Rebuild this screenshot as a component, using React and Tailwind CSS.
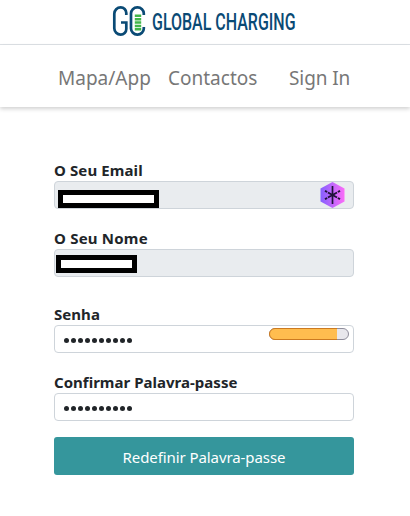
const ui = "font-['Noto_Sans','Open_Sans',sans-serif]";

function Logo() {
  return (
    <div className="flex h-[45px] shrink-0 border-b border-[#dee2e6] pl-[112px] pt-[5px]">
      <svg className="h-8 w-[34px] shrink-0" viewBox="0 0 34 32" fill="none">
        <g stroke="#0a4a75" strokeWidth="2.7">
          <path d="M14.3 10V8a5.6 5.6 0 0 0-5.6-5.6A6.4 6.4 0 0 0 2.3 8.8v14.4a6.4 6.4 0 0 0 6.4 6.4 5.6 5.6 0 0 0 5.6-5.6v-6.5H9" />
          <path d="M31.8 10V8.6a6.2 6.2 0 0 0-6.2-6.2h-.4A6.2 6.2 0 0 0 19 8.6v14.8a6.2 6.2 0 0 0 6.2 6.2h.4a6.2 6.2 0 0 0 6.2-6.2V22" />
        </g>
        <path d="M22.8 9.5h6.4v2.5h-6.4zm0 3.4h6.4v2.5h-6.4zm0 3.4h6.4v2.5h-6.4zm0 3.4h6.4v2.5h-6.4zm0 3.4h6.4v2.5h-6.4z" fill="#42b649" />
      </svg>
      <span className="ml-[6px] mt-[3px] origin-left scale-x-[0.695] whitespace-nowrap font-['Roboto'] text-[23px] font-medium leading-[29px] text-[#0a4a75]">GLOBAL CHARGING</span>
    </div>
  );
}

function Field({ label, tracking = "", className = "", children }) {
  return (
    <div className={className}>
      <label className={`-mt-px mb-px block h-5 whitespace-nowrap text-[15px] font-bold leading-5 ${tracking}`}>{label}</label>
      {children}
    </div>
  );
}

const box = "relative flex h-7 items-center rounded-[4px] border border-[#ced4da]";

export default function App() {
  return (
    <div className={`flex h-[516px] w-[410px] flex-col overflow-hidden bg-white text-[#212529] ${ui}`}>
      <Logo />
      <nav className="flex h-[62px] shrink-0 items-center whitespace-nowrap pl-[58px] pt-[4px] text-[19px] text-[#777] shadow-[0_2px_4px_rgba(0,0,0,0.18)]">
        <a className="w-[110px]">Mapa/App</a>
        <a className="w-[121px]">Contactos</a>
        <a className="tracking-[-0.1px]">Sign In</a>
      </nav>
      <main className="ml-[54px] mt-[54px] flex w-[300px] flex-col">
        <Field label="O Seu Email" tracking="tracking-[0.1px]">
          <div className={`${box} bg-[#e9ecef]`}>
            <span className="ml-[3px] mt-[8px] h-[18px] w-[101px] border-[5px] border-black bg-white" />
            <svg className="absolute left-[265px] top-0 h-[26px] w-[25px]" viewBox="0 0 25 26">
              <defs>
                <linearGradient id="hex"><stop stopColor="#8560ff" /><stop offset="1" stopColor="#fc6cf8" /></linearGradient>
              </defs>
              <path d="M12.5 0 24.5 6.5v13L12.5 26 .5 19.5v-13z" fill="url(#hex)" />
              <path d="M12.5 4v18" stroke="#20123a" strokeWidth="1.7" />
              <path d="M12.5 13 5 8.8M12.5 13l7.5 4.2M12.5 13 20 8.8M12.5 13 5 17.2" stroke="#20123a" strokeWidth="1.9" strokeDasharray="5.2 .9 3" />
            </svg>
          </div>
        </Field>
        <Field label="O Seu Nome" tracking="tracking-[0.2px]" className="mt-5">
          <div className={`${box} bg-[#e9ecef]`}>
            <span className="ml-px mt-px h-[18px] w-[81px] border-[5px] border-black bg-white" />
          </div>
        </Field>
        <Field label="Senha" tracking="tracking-[0.05px]" className="mt-7">
          <div className={box}>
            <Dots />
            <svg className="absolute left-[214px] top-[2px] h-3 w-20" viewBox="0 0 80 12">
              <rect x=".5" y=".5" width="79" height="11" rx="5.5" fill="#e8e7ec" stroke="#8f8d9b" />
              <path d="M68 .5H6a5.5 5.5 0 0 0 0 11h62" fill="#ffbd4f" stroke="#cc7a20" />
            </svg>
          </div>
        </Field>
        <Field label="Confirmar Palavra-passe" tracking="tracking-[0.02px]" className="mt-5">
          <div className={box}><Dots /></div>
        </Field>
        <button className="mt-4 h-[38px] whitespace-nowrap rounded-[3px] bg-[#35969c] pt-[3px] text-[15px] tracking-[-0.08px] text-white">Redefinir Palavra-passe</button>
      </main>
    </div>
  );
}

function Dots() {
  return (
    <span className="ml-[9px] mt-[3px] flex gap-[2px]">
      {Array.from({ length: 10 }, (_, i) => (
        <i key={i} className="size-[5px] rounded-full bg-[#212529]" />
      ))}
    </span>
  );
}
